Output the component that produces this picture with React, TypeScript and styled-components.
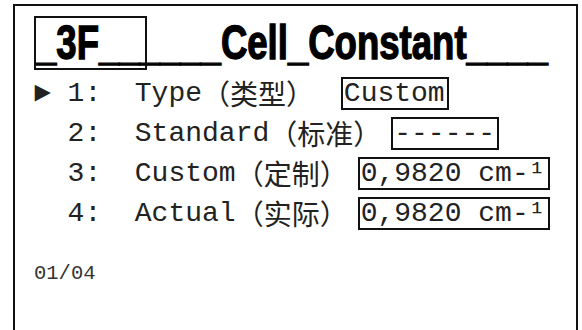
import React from "react";
import styled, { createGlobalStyle } from "styled-components";

const GlobalStyle = createGlobalStyle`
  html, body {
    margin: 0;
    padding: 0;
    background: #ffffff;
    overflow: hidden;
  }
`;

const rows = [
  { no: "1", label: "Type", cn: "（类型） ", value: "Custom", active: true },
  { no: "2", label: "Standard", cn: "（标准）", value: "------", active: false },
  { no: "3", label: "Custom", cn: "（定制）", value: "0,9820 cm-¹", active: false },
  { no: "4", label: "Actual", cn: "（实际）", value: "0,9820 cm-¹", active: false },
];

export default function App() {
  return (
    <>
      <GlobalStyle />
      <Frame>
        <TitleLine>
          <TitleText>_3F______Cell_Constant____</TitleText>
          <IdBox />
        </TitleLine>
        <List>
          {rows.map((r) => (
            <Row key={r.no}>
              <Marker>{r.active ? "►" : " "}</Marker>
              {` ${r.no}:  ${r.label}`}
              <Cn>{r.cn}</Cn>
              <Value>{r.value}</Value>
            </Row>
          ))}
        </List>
        <Page>01/04</Page>
      </Frame>
    </>
  );
}

const Frame = styled.div`
  box-sizing: border-box;
  margin: 4px 4px 0 13px;
  height: 340px;
  border: 2px solid #111;
  border-bottom: none;
  padding: 10px 0 0 19px;
`;

const TitleLine = styled.div`
  position: relative;
  height: 54px;
`;

const TitleText = styled.div`
  padding: 8px 0 0 2px;
  height: 42px;
  font-family: "Liberation Sans", "DejaVu Sans", sans-serif;
  font-weight: 700;
  font-size: 42px;
  line-height: 42px;
  color: #000;
  -webkit-text-stroke: 1.2px #000;
  white-space: nowrap;
  transform-origin: 2px 44px;
  transform: scale(0.87, 1.165);
`;

/* the boxed field number sits over the title underline */
const IdBox = styled.div`
  position: absolute;
  left: 0;
  top: 0;
  box-sizing: border-box;
  width: 113px;
  height: 54px;
  border: 2px solid #111;
`;

const List = styled.div`
  margin-top: 3px;
  display: flex;
  flex-direction: column;
  font-family: "Liberation Mono", "Noto Sans CJK SC", monospace;
  font-size: 28px;
  color: #222;
`;

const Row = styled.div`
  display: flex;
  align-items: center;
  height: 40px;
  white-space: pre;
`;

const Marker = styled.span`
  display: inline-block;
  width: 16.8px;
`;

const Cn = styled.span`
  margin-right: 10px;
`;

const Value = styled.span`
  box-sizing: border-box;
  height: 33px;
  line-height: 29px;
  padding: 0 2px 0 1px;
  border: 2px solid #111;
`;

const Page = styled.div`
  margin-top: 29px;
  font-family: "Liberation Mono", monospace;
  font-size: 20.5px;
  line-height: 24px;
  color: #333;
`;
